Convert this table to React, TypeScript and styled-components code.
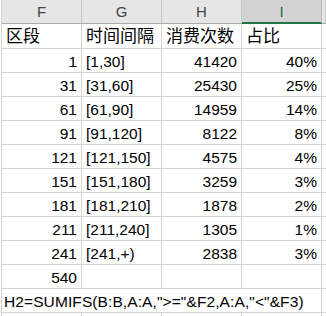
import { styled, createGlobalStyle } from 'styled-components';

const GlobalStyle = createGlobalStyle`
  html, body {
    margin: 0;
    padding: 0;
    background: #ffffff;
  }
  body {
    width: 326px;
    height: 316px;
    overflow: hidden;
    font-family: 'Liberation Sans', 'Noto Sans CJK SC', sans-serif;
  }
`;

const COL = 80;
const GRID = '#d4d4d4';
// the next column (J) only shows a 4px sliver at the right edge
const TRACKS = `repeat(4, ${COL}px) 4px`;

const Sheet = styled.div`
  margin-left: 1px;
  border-left: 1px solid ${GRID};
  display: flex;
  flex-direction: column;
  width: 324px;
  overflow: hidden;
`;

const HeaderRow = styled.div`
  display: grid;
  grid-template-columns: ${TRACKS};
  height: 24px;
`;

const ColHead = styled.div<{ $selected?: boolean }>`
  box-sizing: border-box;
  display: flex;
  align-items: center;
  justify-content: center;
  background: ${(p) => (p.$selected ? '#d2d2d2' : '#e6e6e6')};
  border-right: 1px solid ${(p) => (p.$selected ? '#bdbdbd' : '#c8c8c8')};
  border-bottom: ${(p) => (p.$selected ? '2px solid #217346' : '1px solid #ababab')};
  color: ${(p) => (p.$selected ? '#1e6b41' : '#444444')};
  font-size: 15px;
  padding-top: ${(p) => (p.$selected ? '1px' : '0')};
  overflow: hidden;
`;

const Row = styled.div<{ $height?: number }>`
  display: grid;
  grid-template-columns: ${TRACKS};
  height: ${(p) => p.$height ?? 24}px;
`;

const Cell = styled.div<{ $align?: 'left' | 'right'; $cjk?: boolean; $open?: boolean }>`
  box-sizing: border-box;
  display: flex;
  align-items: flex-end;
  justify-content: ${(p) => (p.$align === 'right' ? 'flex-end' : 'flex-start')};
  padding: 0 4px ${(p) => (p.$cjk ? '1px' : '0')} 4px;
  border-right: 1px solid ${GRID};
  border-bottom: ${(p) => (p.$open ? 'none' : `1px solid ${GRID}`)};
  color: #000000;
  font-size: ${(p) => (p.$cjk ? '17px' : '15.5px')};
  line-height: 20px;
  white-space: nowrap;
  min-width: 0;
`;

const Sliver = styled.div<{ $open?: boolean }>`
  box-sizing: border-box;
  border-bottom: ${(p) => (p.$open ? 'none' : `1px solid ${GRID}`)};
`;

const SpanCell = styled(Cell)`
  grid-column: 1 / span 4;
  padding-left: 2px;
  letter-spacing: 0.1px;
`;

const columns = ['F', 'G', 'H', 'I'];

const rows: [string, string, string, string][] = [
  ['1', '[1,30]', '41420', '40%'],
  ['31', '[31,60]', '25430', '25%'],
  ['61', '[61,90]', '14959', '14%'],
  ['91', '[91,120]', '8122', '8%'],
  ['121', '[121,150]', '4575', '4%'],
  ['151', '[151,180]', '3259', '3%'],
  ['181', '[181,210]', '1878', '2%'],
  ['211', '[211,240]', '1305', '1%'],
  ['241', '[241,+)', '2838', '3%'],
  ['540', '', '', ''],
];

export default function App() {
  return (
    <>
      <GlobalStyle />
      <Sheet>
        <HeaderRow>
          {columns.map((c) => (
            <ColHead key={c} $selected={c === 'I'}>
              {c}
            </ColHead>
          ))}
          <ColHead />
        </HeaderRow>

        <Row $height={25}>
          <Cell $cjk>区段</Cell>
          <Cell $cjk>时间间隔</Cell>
          <Cell $cjk>消费次数</Cell>
          <Cell $cjk>占比</Cell>
          <Sliver />
        </Row>

        {rows.map(([f, g, h, i]) => (
          <Row key={f}>
            <Cell $align='right'>{f}</Cell>
            <Cell>{g}</Cell>
            <Cell $align='right'>{h}</Cell>
            <Cell $align='right'>{i}</Cell>
            <Sliver />
          </Row>
        ))}

        <Row>
          <SpanCell>H2=SUMIFS(B:B,A:A,"&gt;="&amp;F2,A:A,"&lt;"&amp;F3)</SpanCell>
          <Sliver />
        </Row>

        <Row $height={3}>
          <Cell $open />
          <Cell $open />
          <Cell $open />
          <Cell $open />
          <Sliver $open />
        </Row>
      </Sheet>
    </>
  );
}
